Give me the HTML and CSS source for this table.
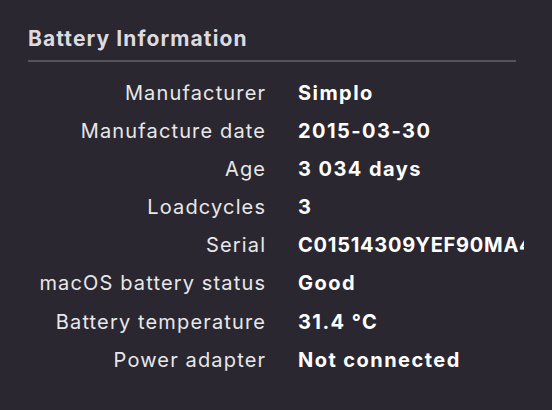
FILE: index.html
```html
<!DOCTYPE html>
<html>
<head>
<meta charset="utf-8">
<link rel="stylesheet" href="styles.css">
</head>
<body>
<div class="panel">
  <h2 class="title">Battery Information</h2>
  <div class="rows">
    <div class="label">Manufacturer</div><div class="value">Simplo</div>
    <div class="label">Manufacture date</div><div class="value">2015-03-30</div>
    <div class="label">Age</div><div class="value">3 034 days</div>
    <div class="label">Loadcycles</div><div class="value">3</div>
    <div class="label">Serial</div><div class="value serial">C01514309YEF90MA4</div>
    <div class="label">macOS battery status</div><div class="value">Good</div>
    <div class="label">Battery temperature</div><div class="value">31.4 °C</div>
    <div class="label">Power adapter</div><div class="value">Not connected</div>
  </div>
</div>
</body>
</html>
```
FILE: styles.css
```css
html, body {
  margin: 0;
  background: #2a2730;
}
body {
  width: 552px;
  height: 410px;
  overflow: hidden;
  font-family: Inter, "Noto Sans", sans-serif;
}
.panel {
  padding: 26px 28px 0 28px;
}
.title {
  margin: 0 8px 0 0;
  font-size: 21px;
  font-weight: 700;
  letter-spacing: 1.1px;
  color: #dddbe0;
  line-height: 26px;
  padding-bottom: 8px;
  border-bottom: 2px solid #56535b;
}
.rows {
  display: grid;
  grid-template-columns: 237px 1fr;
  column-gap: 33px;
  margin-top: 12px;
  font-size: 20px;
  line-height: 38.1px;
}
.label {
  text-align: right;
  color: #e8e7ea;
  font-weight: 400;
  letter-spacing: 1.15px;
  margin-right: -1.15px;
}
.value {
  color: #ffffff;
  font-weight: 700;
  letter-spacing: 1.45px;
  white-space: nowrap;
  overflow: hidden;
}
.serial {
  letter-spacing: 0.75px;
}
```
